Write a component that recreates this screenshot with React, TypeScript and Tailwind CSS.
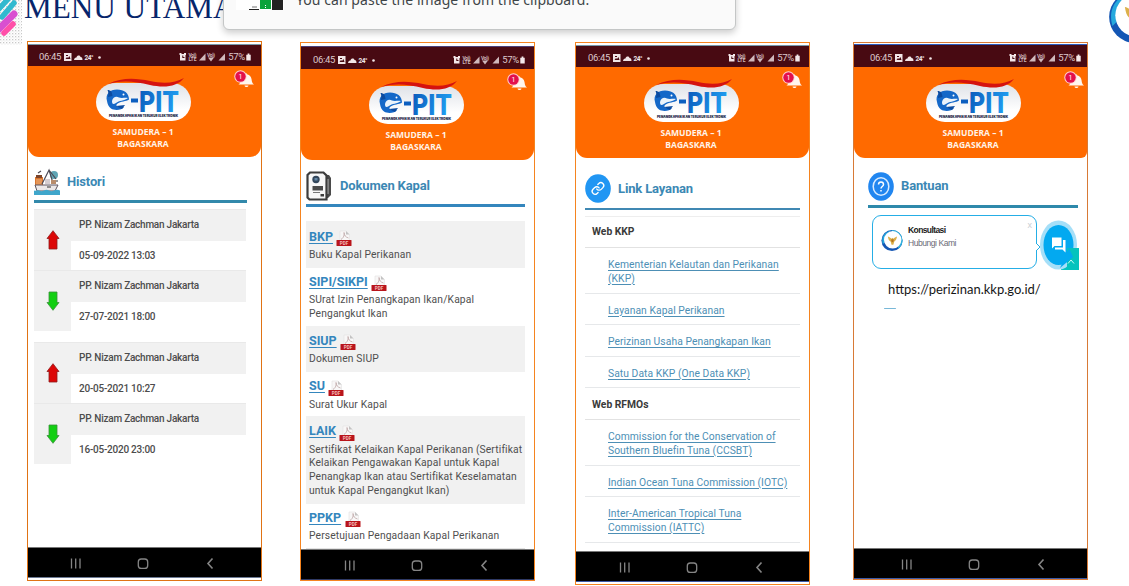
import type { ReactNode } from "react";

function Logo() {
  return (
    <svg viewBox="0 0 100 46" className="block h-[46px] w-[100px] shrink-0">
      <defs>
        <linearGradient id="pill" x1="0" y1="0" x2="0" y2="1">
          <stop offset="0" stopColor="#dfe2e8" />
          <stop offset="0.7" stopColor="#ffffff" />
        </linearGradient>
        <linearGradient id="word" x1="0" y1="0" x2="1" y2="0.3">
          <stop offset="0" stopColor="#0a57b8" />
          <stop offset="1" stopColor="#1f9cf0" />
        </linearGradient>
      </defs>
      <rect x="2" y="6" width="95" height="38" rx="19" fill="url(#pill)" />
      <path d="M14 7 C28 0 42 1 56 4 C70 7 81 6 90 1 C83 10 70 11 56 8 C40 4 28 3 14 7Z" fill="#d5130f" />
      <path
        d="M13 24 C11 17 16 12.500 23 12.500 C30 12.500 35 16 35 22.500 C32 24.500 27 24 23 27 C21 29 24 30.500 30 30 C28 33 21 34 17 31.500 C14.500 30 13.500 27 13 24Z"
        fill="#1468c8"
      />
      <path d="M13.500 13 C17 13 18 15 18.500 19 L14 20 C14.500 17 14.500 15 13.500 13Z" fill="#0b4ba0" />
      <path d="M18 24 C19 20 22 19 25 20.500 C27 21.500 31 20.500 34 21 C30 24 25 23.500 22 26 C19 28 18 27 18 24Z" fill="#eaf3fb" />
      <circle cx="29.500" cy="17.500" r="1" fill="#fff" />
      <path d="M22 29 l9 -1 l-3 4 z" fill="#0b4ba0" />
      <path d="M37 21.500h7v4h-7z" fill="#0d5fc0" />
      <text x="45" y="34.500" textLength="40" lengthAdjust="spacingAndGlyphs" fontFamily="Inter, sans-serif" fontWeight="800" fontSize="29" fill="url(#word)">
        PIT
      </text>
      <text x="15" y="39.800" textLength="69" lengthAdjust="spacingAndGlyphs" fontFamily="Inter, sans-serif" fontWeight="900" fontSize="3.800" fill="#16213e">
        PENANGKAPAN IKAN TERUKUR ELEKTRONIK
      </text>
    </svg>
  );
}

function StatusBar({ className }: { className: string }) {
  return (
    <div className={`flex shrink-0 items-center bg-[#480a12] pt-[3px] text-[#dcc8cb] ${className}`}>
      <span className="font-[Roboto,sans-serif] text-[9.5px] leading-none tracking-[-0.3px]">06:45</span>
      <svg viewBox="0 0 44 10" className="ml-[3px] h-[10px] w-[44px]" fill="#f1e6e7">
        <path d="M0 1h7.500v8h-7.500z" />
        <path d="M1.500 7l1.500-2 1 1 1.500-2 1 3z M2 3h2v1h-2z" fill="#480a12" />
        <path d="M10 8c0-2 2-2.500 2.500-2.500C13 3 16 3 16.500 5 18 5 18.500 6 18.500 8z" />
        <text x="20.500" y="8" fontFamily="Roboto, sans-serif" fontSize="6.500" fontWeight="700" textLength="9">24°</text>
        <circle cx="35.500" cy="5.500" r="1.300" />
      </svg>
      <div className="flex-1" />
      <svg viewBox="0 0 48 10" className="h-[10px] w-[48px]" fill="#cfb9bc">
        <path d="M1 2h5.500v6.500h-5.500z M0.500 1h2v2h-2z M5 1h2v2h-2z" fill="#f3e8e9" />
        <path d="M3.300 3.500h1v1.500h1.200v1h-2.200z" fill="#480a12" />
        <g fontFamily="Roboto, sans-serif" fontSize="5" fontWeight="700">
          <text x="9.500" y="4.800" textLength="8">Vo))</text>
          <text x="9.500" y="9.200" textLength="8">LTE</text>
          <text x="28" y="4.800" textLength="8">Vo))</text>
        </g>
        <path d="M26.500 1.500v7h-6.500z M29 5.600h6l-3 3.900z" />
        <path d="M46 1.500v7h-6.500z" />
      </svg>
      <span className="ml-[1px] font-[Roboto,sans-serif] text-[9.5px] leading-none tracking-[-0.3px]">57%</span>
      <svg viewBox="0 0 5 9" className="ml-[1px] h-[8px] w-[5px]" fill="#f3e8e9">
        <path d="M1.500 0.500h2v1.500h1.500v6.500h-5v-6.500h1.500z" />
      </svg>
    </div>
  );
}

function Banner({ className }: { className: string }) {
  return (
    <div className={`flex h-[91px] shrink-0 flex-col items-center bg-[#ff6a00] pt-[11px] ${className}`}>
      <div className="relative flex w-[233px] flex-col items-center">
        <div className="ml-[-2px]">
          <Logo />
        </div>
        <div className="mt-[2.5px] mr-[3px] text-center font-['Open_Sans',sans-serif] text-[8.5px] leading-[12px] font-bold text-[#fff3e8]">
          <div>SAMUDERA – 1</div>
          <div>BAGASKARA</div>
        </div>
        <svg viewBox="0 0 22 20" className="absolute top-[-8px] right-[5px] h-[20px] w-[22px]">
          <path d="M4.500 15.500c2-1 2-3 2.500-6 .5-3 2.500-4 4-4l1-1.500 1.500 1.500c2 .5 3.500 2 4 4.500.5 3 .5 4 2.500 5.500z M10.500 16.500h4c-.5 2-3.500 2-4 0z" fill="#fff6ef" />
          <circle cx="6.500" cy="7.500" r="6.200" fill="#ffd0cf" />
          <circle cx="6.500" cy="7.500" r="5.200" fill="#e3104c" />
          <text x="6.500" y="10" textAnchor="middle" fontFamily="Roboto, sans-serif" fontSize="7" fill="#fff">1</text>
        </svg>
      </div>
    </div>
  );
}

function NavBar({ className }: { className: string }) {
  return (
    <div className={`flex h-[31px] shrink-0 items-center border-t border-b border-t-[#777] bg-black ${className}`}>
      <svg viewBox="0 0 228 28" className="h-[28px] w-[228px]" fill="none" stroke="#858585" strokeWidth="1.300">
        <path d="M43.500 9.500v10 M47.700 9.500v10 M52 9.500v10" />
        <rect x="110.300" y="10" width="9.400" height="9.400" rx="3" />
        <path d="M184.500 9.500l-4.500 5 4.500 5" strokeWidth="1.600" />
      </svg>
    </div>
  );
}

type PhoneProps = { className: string; status: string; banner?: string; nav: string; children: ReactNode };

function Phone({ className, status, banner = "rounded-b-[11px]", nav, children }: PhoneProps) {
  return (
    <section className={`flex w-[235px] shrink-0 flex-col overflow-hidden border bg-white font-[Roboto,sans-serif] ${className}`}>
      <StatusBar className={status} />
      <Banner className={banner} />
      <div className="flex min-h-0 flex-1 flex-col overflow-hidden">{children}</div>
      <NavBar className={nav} />
    </section>
  );
}

function Arrow({ up }: { up: boolean }) {
  return up ? (
    <svg viewBox="0 0 14 20" className="h-[20px] w-[14px]">
      <path d="M7 .7l6 7.800h-2v10.500h-8v-10.500H1z" fill="#dc0707" stroke="#8d1d1d" strokeWidth="0.800" />
    </svg>
  ) : (
    <svg viewBox="0 0 14 20" className="h-[20px] w-[14px]">
      <path d="M7 19.300l6-7.800h-2v-10.500h-8v10.500H1z" fill="#12cf12" stroke="#3b8f3b" strokeWidth="0.800" />
    </svg>
  );
}

function Visit({ up, date }: { up: boolean; date: string }) {
  return (
    <div className="flex h-[61px] text-[10px] font-medium tracking-[-0.24px] text-[#4c4c4c]">
      <div className="flex w-[37px] items-center justify-center border-t border-[#e9e9e9] bg-[#f1f1f1]">
        <Arrow up={up} />
      </div>
      <div className="flex flex-1 flex-col">
        <div className="flex h-[32px] items-center border-t border-[#e9e9e9] bg-[#f1f1f1] pb-[2px] pl-[8px]">PP. Nizam Zachman Jakarta</div>
        <div className="flex flex-1 items-center pb-px pl-[8px]">{date}</div>
      </div>
    </div>
  );
}

function ShipIcon() {
  return (
    <svg viewBox="0 0 26 28" className="h-[28px] w-[26px]">
      <path d="M1 9h8v9H1z" fill="#d8752e" />
      <path d="M2 7h6v3H2z" fill="#7d4429" />
      <path d="M3 11v6 M5 11v6 M7 11v6" stroke="#f7c79b" strokeWidth="0.800" />
      <circle cx="20" cy="7" r="4" fill="#5fa5b5" />
      <path d="M8 16L15 2l4 13 M15 2l7 9 M4 5l3-2" stroke="#4d4a55" strokeWidth="1.200" fill="none" />
      <path d="M11 11h5v5h-5z" fill="#d5cdd0" />
      <path d="M1 17h23l-3 6H3z" fill="#ece8e8" stroke="#5c5560" strokeWidth="1" />
      <path d="M17 12h5v4h-5z" fill="#b98d6c" />
      <path d="M0 22.500c2 1 3-1 5 0s3 1 5 0 3-1 5 0 3 1 5 0 4-1 6 0V27H0z" fill="#3fa6cb" />
      <path d="M23 12v2 M13 19h4" stroke="#333" strokeWidth="1" />
    </svg>
  );
}

function DocIcon() {
  return (
    <svg viewBox="0 0 26 30" className="h-[30px] w-[26px]">
      <path d="M18 4h5l2 3v17l-3 3h-4z" fill="#4a4a4a" />
      <path d="M20 8h2.500v15h-2.500z" fill="#b9b9b9" />
      <path d="M4 1.500h13.500l3 3v24H3.500l-2-2V4z" fill="#f7f7f7" stroke="#3c3c3c" strokeWidth="2.200" />
      <circle cx="10" cy="8.500" r="3.700" fill="#33475c" />
      <path d="M8.500 7h3v2.500h-3z" fill="#6488a7" />
      <path d="M6.500 15h10.500v4.500h-10.500z" fill="#4a4a4a" />
      <path d="M7 21.500h7" stroke="#777" strokeWidth="1" />
      <path d="M14.500 23h3.500v2.500h-3.500z" fill="#3d3d3d" />
    </svg>
  );
}

function PdfIcon() {
  return (
    <svg viewBox="0 0 16 16" className="mt-[2px] ml-[3.500px] h-[16px] w-[16px]">
      <path d="M4 1h6l3.500 3.500V11H4z" fill="#f8f7f7" stroke="#e2e0e0" strokeWidth="0.600" />
      <path d="M5 9.500c3-2 3.500-5 3-7 .2 3 1.500 4.500 4.500 5.500" fill="none" stroke="#bda5a5" strokeWidth="0.800" />
      <path d="M10 1l3.500 3.500H10z" fill="#c3c3c3" />
      <rect x="0.500" y="10" width="15" height="6" rx="0.600" fill="#b9151b" />
      <text x="8" y="14.700" textAnchor="middle" fontFamily="Roboto, sans-serif" fontWeight="700" fontSize="4.600" fill="#f3bcbc">PDF</text>
    </svg>
  );
}

function Doc({ code, lines, className }: { code: string; lines: string[]; className: string }) {
  return (
    <div className={`shrink-0 pl-[3px] ${className}`}>
      <div className="flex h-[18px] items-center">
        <span className="text-[12.5px] leading-none font-bold text-[#3486bd] underline underline-offset-[2px]">{code}</span>
        <PdfIcon />
      </div>
      <div className="mt-[2px] text-[10.3px] leading-[13.7px] tracking-[0.13px] whitespace-nowrap text-[#4f4f4f]">
        {lines.map((l) => (
          <div key={l}>{l}</div>
        ))}
      </div>
    </div>
  );
}

function Head({ text, icon, className }: { text: string; icon: ReactNode; className: string }) {
  return (
    <div className={`flex shrink-0 items-center text-[13px] font-bold tracking-[-0.15px] text-[#3b88b4] ${className}`}>
      {icon}
      <span className="mt-[-1px] leading-none whitespace-nowrap">{text}</span>
    </div>
  );
}

function LinkRow({ lines, className }: { lines: string[]; className: string }) {
  return (
    <div className={`flex shrink-0 flex-col justify-center border-b border-[#e6e8ea] pt-[3px] pl-[23px] text-[10.3px] leading-[13.5px] tracking-[0.06px] whitespace-nowrap text-[#4d8fb5] underline underline-offset-[1.500px] ${className}`}>
      {lines.map((l) => (
        <div key={l}>{l}</div>
      ))}
    </div>
  );
}

function Garuda({ className }: { className: string }) {
  return (
    <svg viewBox="0 0 48 48" className={className}>
      <circle cx="24" cy="24" r="23" fill="#1456b4" />
      <path d="M24 1A23 23 0 0 1 47 24c0 8-5 15-10 18L40 20 24 6z" fill="#2fb2dd" />
      <path d="M4 32C-1 16 9 3 24 2c-12 5-17 14-16 26z" fill="#25a8dd" />
      <circle cx="25.500" cy="22.500" r="19" fill="#fff" />
      <path d="M15 15c4 1 5 3 8 5l2-2 2 2c3-2 4-4 8-5-1 6-3 9-6 11l-2 7h-4l-2-7c-4-2-5-5-6-11z" fill="#dcb04a" />
      <path d="M22.500 21h5v5l-2.500 2-2.500-2z" fill="#b5751d" />
    </svg>
  );
}

function Corner() {
  return (
    <svg viewBox="0 0 22 45" className="h-[45px] w-[22px] shrink-0">
      <defs>
        <pattern id="dots" width="3" height="3" patternUnits="userSpaceOnUse">
          <rect width="1.300" height="1.300" fill="#c9c9c9" />
          <rect x="1.500" y="1.500" width="1" height="1" fill="#dedede" />
        </pattern>
      </defs>
      <rect width="22" height="45" fill="url(#dots)" />
      <g strokeLinecap="round" strokeWidth="5.500">
        <path d="M-2 10L9-2" stroke="#31b9cf" />
        <path d="M2 17L14 3" stroke="#31b9cf" />
        <path d="M-2 30L14 14" stroke="#d94fd0" strokeWidth="7" />
        <path d="M4 33L13 24" stroke="#ff4fa8" />
      </g>
    </svg>
  );
}

const docs = [
  { code: "BKP", lines: ["Buku Kapal Perikanan"], className: "h-[47px] bg-[#f1f1f1] pt-[7px]" },
  { code: "SIPI/SIKPI", lines: ["SUrat Izin Penangkapan Ikan/Kapal", "Pengangkut Ikan"], className: "h-[57.5px] pt-[5px]" },
  { code: "SIUP", lines: ["Dokumen SIUP"], className: "h-[46.5px] bg-[#f1f1f1] pt-[6.5px]" },
  { code: "SU", lines: ["Surat Ukur Kapal"], className: "h-[44px] pt-[5.500px]" },
  {
    code: "LAIK",
    lines: [
      "Sertifikat Kelaikan Kapal Perikanan (Sertifikat",
      "Kelaikan Pengawakan Kapal untuk Kapal",
      "Penangkap Ikan atau Sertifikat Keselamatan",
      "untuk Kapal Pengangkut Ikan)",
    ],
    className: "h-[88px] bg-[#f1f1f1] pt-[6.5px]",
  },
  { code: "PPKP", lines: ["Persetujuan Pengadaan Kapal Perikanan"], className: "h-[45px] border-b border-[#e3e3e3] pt-[5px]" },
];

export default function App() {
  return (
    <main className="relative h-[586px] w-[1129px] overflow-hidden bg-white">
      <header className="flex h-[41px] items-start">
        <Corner />
        <h1 className="mt-[-11px] ml-[2px] font-['Liberation_Serif',serif] text-[31.2px] leading-[38px] whitespace-nowrap text-[#07256b]">MENU UTAMA</h1>
        <div className="flex-1" />
        <Garuda className="mt-[-10px] mr-[-33px] h-[54px] w-[54px] shrink-0" />
      </header>

      <div className="flex items-start pl-[27px]">
        <Phone className="h-[540px] border-[#e07314] pt-[2px] pb-[2px]" status="h-[22px] border-t border-[#7799aa] pr-[10px] pl-[11px]" nav="border-b-[#6c7a94]">
          <Head text="Histori" className="ml-[6px] h-[43px] gap-[7px] pt-[6px]" icon={<ShipIcon />} />
          <div className="ml-[6px] h-[3px] w-[213px] shrink-0 bg-[#3289ab]" />
          <div className="mt-[6px] ml-[6px] w-[212px]">
            <Visit up date="05-09-2022 13:03" />
            <Visit up={false} date="27-07-2021 18:00" />
            <div className="h-[11px]" />
            <Visit up date="20-05-2021 10:27" />
            <Visit up={false} date="16-05-2020 23:00" />
          </div>
        </Phone>

        <Phone className="mt-[1px] ml-[38px] h-[539px] border-[#f5841f] pt-[3px]" status="h-[23px] border-t border-[#4b3f78] pr-[9px] pl-[12px]" nav="border-b-[#2f3a66] pl-px">
          <Head text="Dokumen Kapal" className="ml-[5px] h-[44px] gap-[8px] pt-[7px]" icon={<DocIcon />} />
          <div className="ml-[5px] h-[3px] w-[219px] shrink-0 bg-[#3486bd]" />
          <div className="mt-[14px] ml-[5px] w-[219px]">
            {docs.map((d) => (
              <Doc key={d.code} {...d} />
            ))}
          </div>
        </Phone>

        <Phone className="mt-[1px] ml-[40px] h-[543px] border-[#f5841f] pt-[2px] pb-[2px]" status="h-[22px] border-t border-[#7799aa] pr-[9px] pl-[12px]" nav="border-b-[#3d5ba8] pl-px">
          <Head
            text="Link Layanan"
            className="ml-[9px] h-[50px] gap-[7px] pt-[11px]"
            icon={
              <svg viewBox="0 0 26 29" className="h-[29px] w-[26px]">
                <ellipse cx="13" cy="14.500" rx="12.800" ry="14.300" fill="#2196f3" />
                <g transform="translate(6 7.500) scale(0.580)" fill="none" stroke="#fff" strokeWidth="2.300" strokeLinecap="round">
                  <path d="M10 13a5 5 0 0 0 7.540.54l3-3a5 5 0 0 0-7.070-7.070l-1.720 1.710" />
                  <path d="M14 11a5 5 0 0 0-7.540-.54l-3 3a5 5 0 0 0 7.070 7.070l1.710-1.710" />
                </g>
              </svg>
            }
          />
          <div className="ml-[9px] h-[2px] w-[215px] shrink-0 bg-[#4088b3]" />
          <div className="mt-[6px] ml-[9px] w-[215px] border-t border-[#eeeeee]">
            <div className="flex h-[31px] items-center border-b border-[#e2e2e2] pl-[7px] text-[10.3px] font-bold text-[#3a3a3a]">Web KKP</div>
            <LinkRow className="h-[45.500px]" lines={["Kementerian Kelautan dan Perikanan", "(KKP)"]} />
            <LinkRow className="h-[31.500px]" lines={["Layanan Kapal Perikanan"]} />
            <LinkRow className="h-[31.500px]" lines={["Perizinan Usaha Penangkapan Ikan"]} />
            <LinkRow className="h-[31.500px]" lines={["Satu Data KKP (One Data KKP)"]} />
            <div className="flex h-[32px] items-center border-b border-[#e2e2e2] pt-[2px] pl-[7px] text-[10.3px] font-bold text-[#3a3a3a]">Web RFMOs</div>
            <LinkRow className="h-[45.500px]" lines={["Commission for the Conservation of", "Southern Bluefin Tuna (CCSBT)"]} />
            <LinkRow className="h-[31.500px]" lines={["Indian Ocean Tuna Commission (IOTC)"]} />
            <LinkRow className="h-[45.500px]" lines={["Inter-American Tropical Tuna", "Commission (IATTC)"]} />
          </div>
        </Phone>

        <Phone
          className="mt-[1px] ml-[43px] h-[538px] border-[#d87a36] pt-[1px]"
          status="h-[23px] border-t border-[#2a5ac0] pr-[6px] pl-[16px]"
          banner="rounded-bl-[11px] rounded-br-[6px] pl-[8px]"
          nav="border-b-[#3d5ba8] pl-[5px]"
        >
          <Head
            text="Bantuan"
            className="ml-[14px] h-[47px] gap-[7px] pt-[9px]"
            icon={
              <svg viewBox="0 0 26 29" className="h-[29px] w-[26px]">
                <ellipse cx="13" cy="14.500" rx="12.800" ry="14.300" fill="#2186f0" />
                <ellipse cx="13" cy="14.500" rx="7.800" ry="8.700" fill="none" stroke="#d8ebff" strokeWidth="1.500" />
                <path d="M10.500 12.500c0-3.500 5-3.500 5 0 0 2-2.500 2-2.500 4 M13 18v1.600" fill="none" stroke="#fff" strokeWidth="1.500" />
              </svg>
            }
          />
          <div className="ml-[14px] h-[2.500px] w-[210px] shrink-0 bg-[#2e89ab]" />
          <div className="mt-[7px] ml-[18px] flex h-[56px] shrink-0 items-start">
            <div className="relative flex h-[54px] w-[165px] shrink-0 rounded-[9px] border border-[#25aee6] bg-white pt-[8px] pl-[8px] font-['Liberation_Sans',sans-serif]">
              <Garuda className="mt-[3px] h-[27px] w-[22px]" />
              <div className="ml-[5px] text-[8.500px] leading-[13.500px] tracking-[-0.45px]">
                <div className="font-bold tracking-[-0.6px] text-[#222]">Konsultasi</div>
                <div className="text-[#6b6b78]">Hubungi Kami</div>
              </div>
              <span className="absolute top-[5px] right-[4px] text-[9px] leading-none text-[#c9ced4]">x</span>
              <svg viewBox="0 0 5 8" className="absolute top-[27px] right-[-5px] h-[8px] w-[5px]">
                <path d="M0 0l4 4-4 4" fill="#fff" stroke="#25aee6" />
              </svg>
            </div>
            <svg viewBox="0 0 41 56" className="ml-[2px] h-[56px] w-[41px] shrink-0">
              <path d="M22 33h18v22H22z" fill="#05c3bd" />
              <ellipse cx="19.500" cy="30" rx="18.500" ry="24.500" fill="#a5dff8" />
              <ellipse cx="19.500" cy="30" rx="15" ry="20" fill="#03a9f0" />
              <path d="M28 33h12v22H28z" fill="#05c3bd" />
              <path d="M21 53L34 42 30 33z" fill="#03a9f0" />
              <path d="M13 22.500h9.500v8.500h-7l-2.500 2.500z" fill="#fff" />
              <path d="M24 25h2.500v12.500l-3-3h-7.500v-2h8z" fill="#fff" />
              <path d="M29 48.500l3-3.500 3 3.500" fill="none" stroke="#c9fbf5" />
            </svg>
          </div>
          <div className="mt-[9px] ml-[34px] font-[Lato,sans-serif] text-[13px] leading-[18px] whitespace-nowrap text-[#161616]">https://perizinan.kkp.go.id/</div>
          <div className="mt-[10px] ml-[30px] h-px w-[12px] shrink-0 rounded-full bg-[#78b8d8]" />
        </Phone>
      </div>

      <div className="absolute top-[-40px] left-[223px] h-[70px] w-[513px] rounded-[6px] border border-[#c4c6c6] bg-[#fafafa] shadow-[0_3px_7px_rgba(0,0,0,0.2)]">
        <div className="flex items-end pt-[29px] pl-[12px]">
          <svg viewBox="0 0 48 14" className="h-[14px] w-[48px]">
            <path d="M0 0h48v14H0z" fill="#fff" />
            <path d="M13 13.500h10" stroke="#222" />
            <path d="M16 11h5" stroke="#777" />
            <path d="M24 0h11v13H24z" fill="#0ba33a" />
            <path d="M29.500 9v1 M29.500 11v1" stroke="#fff" />
            <path d="M36 0h11v14H36z" fill="#222" />
          </svg>
          <span className="ml-[12px] font-['Noto_Sans',sans-serif] text-[14px] leading-[20px] tracking-[0.06px] whitespace-nowrap text-[#3f4548]">You can paste the image from the clipboard.</span>
        </div>
      </div>
    </main>
  );
}
